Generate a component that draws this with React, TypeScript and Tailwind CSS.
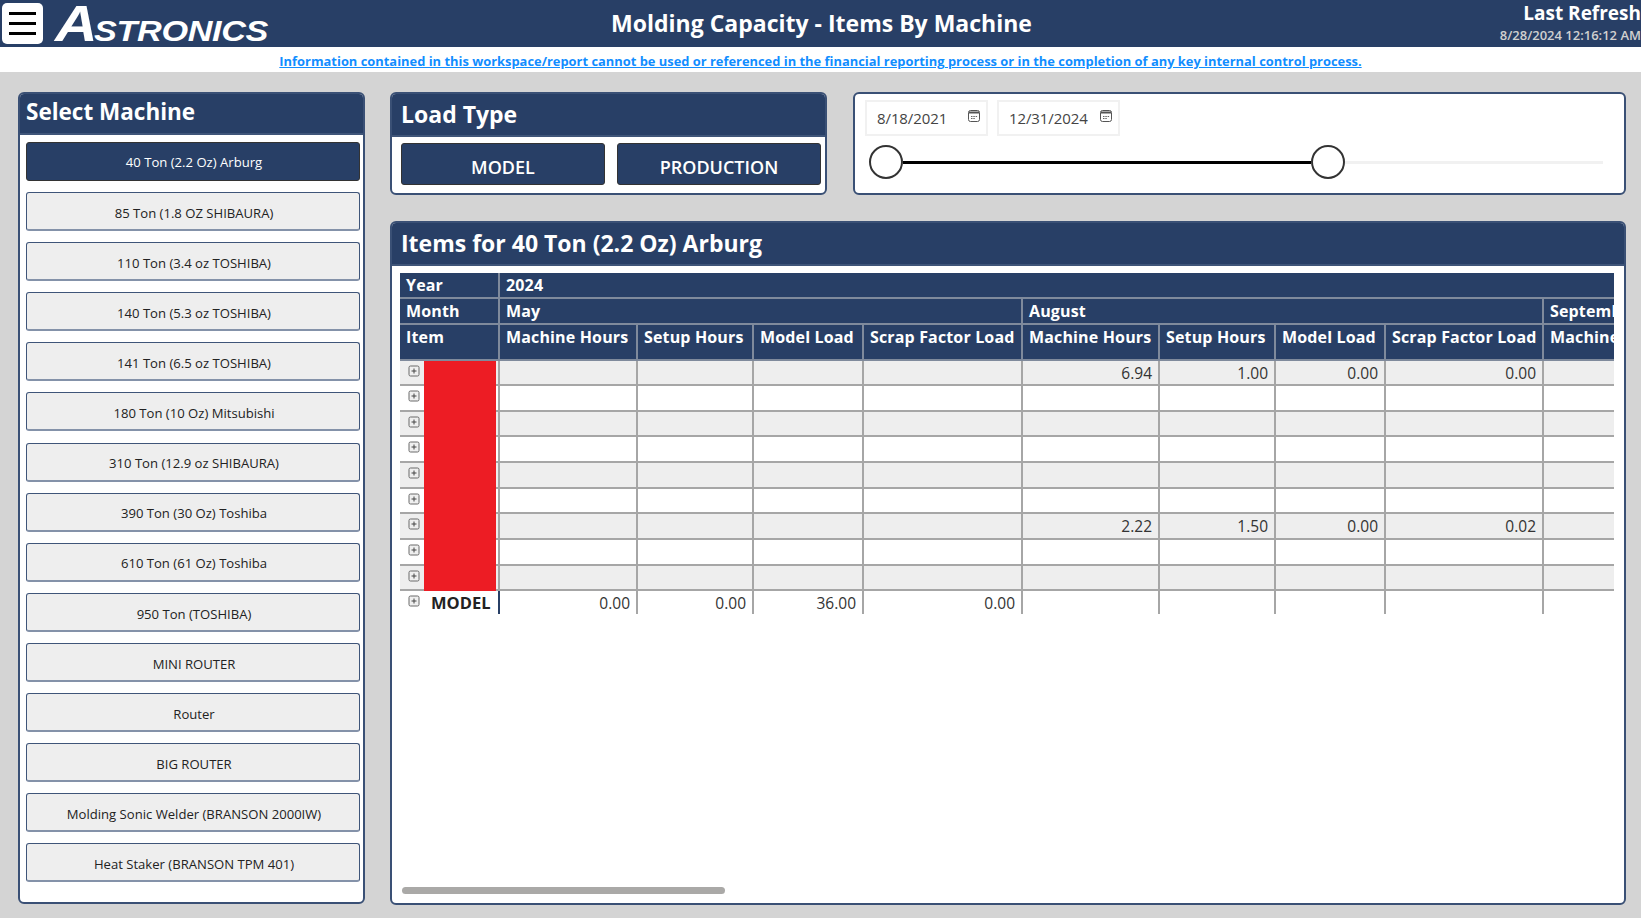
import React from 'react';

const machines = [
  '40 Ton (2.2 Oz) Arburg',
  '85 Ton (1.8 OZ SHIBAURA)',
  '110 Ton (3.4 oz TOSHIBA)',
  '140 Ton (5.3 oz TOSHIBA)',
  '141 Ton (6.5 oz TOSHIBA)',
  '180 Ton (10 Oz) Mitsubishi',
  '310 Ton (12.9 oz SHIBAURA)',
  '390 Ton (30 Oz) Toshiba',
  '610 Ton (61 Oz) Toshiba',
  '950 Ton (TOSHIBA)',
  'MINI ROUTER',
  'Router',
  'BIG ROUTER',
  'Molding Sonic Welder (BRANSON 2000IW)',
  'Heat Staker (BRANSON TPM 401)',
];

const measures = ['Machine Hours', 'Setup Hours', 'Model Load', 'Scrap Factor Load'];

const rows: Record<number, string[]> = {
  0: ['6.94', '1.00', '0.00', '0.00'],
  6: ['2.22', '1.50', '0.00', '0.02'],
};

const rowHeights = ['h-[25px]', 'h-[26px]', 'h-[25px]', 'h-[26px]', 'h-[26px]', 'h-[25px]', 'h-[26px]', 'h-[26px]', 'h-[25px]'];

function ExpandIcon() {
  return (
    <svg width="12" height="12" viewBox="0 0 12 12" className="shrink-0">
      <rect x="1" y="1" width="10" height="10" rx="1.5" fill="#efefef" stroke="#6a6a6a" />
      <path d="M3.5 6h5M6 3.5v5" stroke="#444" />
    </svg>
  );
}

function CalendarIcon() {
  return (
    <svg width="12" height="12" viewBox="0 0 12 12">
      <rect x="0.5" y="0.5" width="11" height="11" rx="2" fill="#fff" stroke="#555" />
      <path d="M1 1.5h10v2H1z" fill="#555" />
      <path d="M3 6.5h1.5M5.3 6.5h1.5M7.6 6.5h1.5M3 8.5h1.5M5.3 8.5h1.5" stroke="#666" />
    </svg>
  );
}

function DateBox({ value, width }: { value: string; width: string }) {
  return (
    <div className={`flex h-[36px] ${width} items-start border-2 border-[#f1f1f1] pl-[10px] pr-[6px]`}>
      <span className="mt-[5px] flex-1 text-[15px] tracking-[-0.1px] text-[#444]">{value}</span>
      <span className="mt-[8px]"><CalendarIcon /></span>
    </div>
  );
}

function PanelHeader({ title, className }: { title: string; className: string }) {
  return (
    <div className={`flex shrink-0 items-center border-b-2 border-[#3f5579] bg-[#283f66] font-bold text-white ${className}`}>
      {title}
    </div>
  );
}

const headCell = 'border-r-2 border-b-2 border-[#7f8a9c] px-[6px] pt-[1px] text-left align-top font-bold';
const lastHeadCell = 'border-b-2 border-[#7f8a9c] px-[6px] pt-[1px] text-left align-top font-bold whitespace-nowrap';
const cols = [138, 116, 110, 159, 137, 116, 110, 158];

function ItemsTable() {
  return (
    <div className="relative mx-[8px] mt-[7px] w-[1214px] overflow-hidden">
      <table className="w-[1214px] table-fixed border-collapse text-[15.5px] leading-[22px]">
        <colgroup>
          <col className="w-[99px]" />
          {cols.map((w, i) => (
            <col key={i} style={{ width: w }} />
          ))}
          <col className="w-[130px]" />
        </colgroup>
        <thead className="bg-[#283f66] text-[16px] tracking-[0.15px] text-white">
          <tr className="h-[25px]">
            <th className={headCell}>Year</th>
            <th colSpan={9} className={lastHeadCell}>2024</th>
          </tr>
          <tr className="h-[26px]">
            <th className={headCell}>Month</th>
            <th colSpan={4} className={headCell}>May</th>
            <th colSpan={4} className={headCell}>August</th>
            <th className={lastHeadCell}>September</th>
          </tr>
          <tr className="h-[36px]">
            <th className={headCell}>Item</th>
            {[0, 1].map((m) =>
              measures.map((label) => (
                <th key={`${m}${label}`} className={`${headCell} whitespace-nowrap`}>{label}</th>
              )),
            )}
            <th className={lastHeadCell}>Machine Hours</th>
          </tr>
        </thead>
        <tbody className="text-[#333]">
          {rowHeights.map((h, r) => (
            <tr key={r} className={`${h} ${r % 2 === 0 ? 'bg-[#eeeeee]' : 'bg-white'}`}>
              <td className="border-b-2 border-r-2 border-[#a6a6a6] pl-[8px] align-top">
                <div className="pt-[4px]"><ExpandIcon /></div>
              </td>
              {Array.from({ length: 4 }).map((_, c) => (
                <td key={c} className="border-b-2 border-r-2 border-[#a6a6a6]" />
              ))}
              {Array.from({ length: 4 }).map((_, c) => (
                <td key={c} className="border-b-2 border-r-2 border-[#a6a6a6] pr-[6px] text-right">
                  {rows[r]?.[c]}
                </td>
              ))}
              <td className="border-b-2 border-[#a6a6a6]" />
            </tr>
          ))}
          <tr className="h-[24px]">
            <td className="border-r-2 border-[#283f66] pl-[8px] pt-[1px] align-top">
              <div className="flex items-start">
                <div className="pt-[3px]"><ExpandIcon /></div>
                <span className="ml-[11px] text-[16.5px] font-bold text-[#222]">MODEL</span>
              </div>
            </td>
            {['0.00', '0.00', '36.00', '0.00'].map((v, c) => (
              <td key={c} className="border-r-2 border-[#a6a6a6] pr-[6px] pt-[1px] text-right">{v}</td>
            ))}
            {Array.from({ length: 4 }).map((_, c) => (
              <td key={c} className="border-r-2 border-[#a6a6a6]" />
            ))}
            <td />
          </tr>
        </tbody>
      </table>
      {/* redacted item names */}
      <div className="absolute left-[24px] top-[88px] h-[230px] w-[72px] bg-[#ed1c24]" />
    </div>
  );
}

export default function App() {
  return (
    <div className="h-[918px] w-[1641px] overflow-hidden bg-[#d4d4d4] font-['Open_Sans',sans-serif]">
      {/* Top bar */}
      <header className="flex h-[47px] items-center bg-[#283f66] text-white">
        <div className="ml-[2px] flex h-[41px] w-[41px] flex-col items-center justify-center gap-[7px] rounded-[5px] bg-white">
          <span className="h-[3px] w-[27px] bg-black" />
          <span className="h-[3px] w-[27px] bg-black" />
          <span className="h-[3px] w-[27px] bg-black" />
        </div>
        <div className="ml-[12px] flex w-[215px] origin-left scale-x-[1.18] items-baseline font-['Liberation_Sans',sans-serif] font-bold italic leading-none">
          <span className="text-[50px] tracking-[-3px]">A</span>
          <span className="text-[29px] tracking-[-0.3px]">STRONICS</span>
        </div>
        <h1 className="flex-1 pr-[48px] text-center text-[23px] font-bold">Molding Capacity - Items By Machine</h1>
        <div className="w-[220px] whitespace-nowrap text-right">
          <div className="text-[19px] font-bold leading-[23px]">Last Refresh</div>
          <div className="text-[13px] font-semibold leading-[21px] text-[#d0d0d0]">8/28/2024 12:16:12 AM</div>
        </div>
      </header>

      {/* Disclaimer */}
      <div className="flex h-[25px] items-center justify-center bg-white pt-[4px] text-[12.9px] font-bold text-[#118dff] underline">
        Information contained in this workspace/report cannot be used or referenced in the financial reporting process or in the completion of any key internal control process.
      </div>

      <main className="flex gap-[25px] pl-[18px] pt-[20px]">
        {/* Machine list */}
        <section className="flex h-[812px] w-[347px] flex-col overflow-hidden rounded-[6px] border-2 border-[#3a5075] bg-white">
          <PanelHeader title="Select Machine" className="h-[41px] pb-[4px] pl-[6px] text-[22.5px]" />
          <div className="flex flex-col gap-[11.1px] pl-[6px] pt-[7px]">
            {machines.map((name, i) => (
              <button
                key={name}
                className={`h-[39px] w-[334px] rounded-[3px] border pl-[2px] text-[13.1px] ${
                  i === 0
                    ? 'border-[#333] bg-[#283f66] pt-[3px] text-white'
                    : 'border-[#3f5579] border-b-[#8492a9] border-b-2 bg-[#eeeeee] pt-[5px] text-[#222]'
                }`}
              >
                {name}
              </button>
            ))}
          </div>
        </section>

        <div className="flex w-[1236px] flex-col gap-[26px]">
          <div className="flex gap-[26px]">
            {/* Load type */}
            <section className="flex h-[103px] w-[437px] flex-col overflow-hidden rounded-[6px] border-2 border-[#3a5075] bg-white">
              <PanelHeader title="Load Type" className="h-[43px] pl-[9px] text-[23px]" />
              <div className="flex gap-[12px] pl-[9px] pt-[6px]">
                {['MODEL', 'PRODUCTION'].map((label) => (
                  <button
                    key={label}
                    className="h-[42px] w-[204px] rounded-[3px] border border-[#333] bg-[#283f66] pt-[6px] text-[18px] font-semibold text-white"
                  >
                    {label}
                  </button>
                ))}
              </div>
            </section>

            {/* Date range */}
            <section className="h-[103px] w-[773px] rounded-[6px] border-2 border-[#3a5075] bg-white pl-[10px] pt-[6px]">
              <div className="flex gap-[9px]">
                <DateBox value="8/18/2021" width="w-[123px]" />
                <DateBox value="12/31/2024" width="w-[123px]" />
              </div>
              <div className="ml-[4px] mt-[9px] flex items-center">
                <span className="h-[34px] w-[34px] shrink-0 rounded-full border-[2.5px] border-[#333] bg-white" />
                <span className="h-[3px] w-[408px] bg-black" />
                <span className="h-[34px] w-[34px] shrink-0 rounded-full border-[2.5px] border-[#333] bg-white" />
                <span className="h-[3px] w-[258px] bg-[#f1f1f1]" />
              </div>
            </section>
          </div>

          {/* Items table */}
          <section className="flex h-[684px] flex-col overflow-hidden rounded-[6px] border-2 border-[#3a5075] bg-white">
            <PanelHeader title="Items for 40 Ton (2.2 Oz) Arburg" className="h-[43px] pl-[9px] text-[23px]" />
            <ItemsTable />
            <div className="mt-auto mb-[9px] ml-[10px] h-[7px] w-[323px] rounded-full bg-[#aaa9a7]" />
          </section>
        </div>
      </main>
    </div>
  );
}
